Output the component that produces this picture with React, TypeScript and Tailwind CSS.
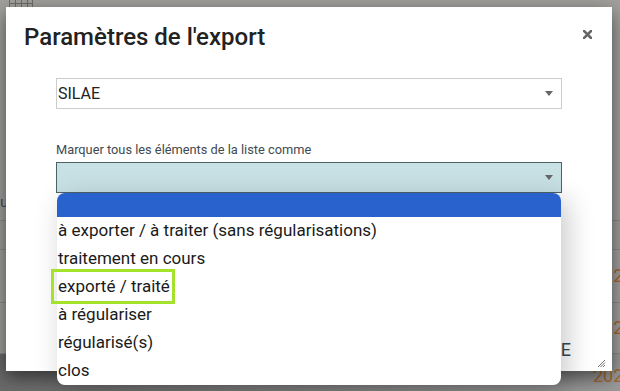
import React from 'react';

const options = [
  'à exporter / à traiter (sans régularisations)',
  'traitement en cours',
  'exporté / traité',
  'à régulariser',
  'régularisé(s)',
  'clos',
];

function Caret() {
  return (
    <svg width="8" height="5" viewBox="0 0 8 5" className="shrink-0">
      <path d="M0 0 L8 0 L4 5 Z" fill="#666" />
    </svg>
  );
}

export default function App() {
  return (
    <div className="relative w-[620px] h-[391px] overflow-hidden bg-[#a3a19e] font-['Roboto',sans-serif]">
      {/* Page behind the overlay */}
      <div className="flex flex-col">
        <div className="h-[8px] flex pl-[9px]">
          <svg width="24" height="8" viewBox="0 0 24 8">
            <path d="M0.5 0 V8 M6.5 0 V8 M12.5 0 V8 M18.5 0 V8 M23.5 0 V8 M0 3.5 H24" stroke="#6e6d6b" strokeWidth="1" fill="none" />
          </svg>
        </div>
        <div className="h-[177px]" />
        <div className="h-[35px] flex items-center text-[15px] text-[#3d4f5a]">ur</div>
        <div className="h-[29px] border-t border-[#8e8c89] bg-[#a09e9b]" />
        <div className="h-[53px] border-t border-[#8e8c89] flex items-center pl-[593px]">
          <span className="text-[18px] leading-[24px] text-[#a8672c] whitespace-nowrap">2023</span>
        </div>
        <div className="h-[51px] border-t border-[#8e8c89] flex items-center pl-[593px]">
          <span className="text-[18px] leading-[24px] text-[#a8672c] whitespace-nowrap">2023</span>
        </div>
        <div className="h-[40px] border-t border-[#8e8c89] bg-gradient-to-r from-[#6a6a6a] to-[#9a9a9a] flex items-start pt-[10px] pl-[593px]">
          <span className="text-[18px] leading-[24px] text-[#a8672c] whitespace-nowrap">2023</span>
        </div>
      </div>

      {/* Modal */}
      <div className="absolute left-[6px] top-[7px] w-[606px] h-[364px] bg-white shadow-[0_6px_18px_rgba(0,0,0,0.55)]">
        <div className="flex items-start justify-between pl-[18px] pr-[20px] pt-[16px]">
          <h2 className="text-[24px] leading-[28px] font-medium text-[#222]">Paramètres de l'export</h2>
          <svg width="9" height="9" viewBox="0 0 9 9" className="mt-[7px]">
            <path d="M1 1 L8 8 M8 1 L1 8" stroke="#666" strokeWidth="2.6" strokeLinecap="square" />
          </svg>
        </div>

        <div className="pl-[50px] pt-[27px] w-[556px]">
          <div className="h-[31px] border border-[#cccccc] flex items-center justify-between pl-[1px] pr-[8px] text-[16px] text-[#222]">
            <span>SILAE</span>
            <Caret />
          </div>

          <div className="mt-[33px] text-[12.8px] leading-[16px] text-[#3f4a50]">
            Marquer tous les éléments de la liste comme
          </div>

          <div className="relative mt-[4px]">
            <div className="h-[31px] border border-[#4d6367] bg-[#c8e1e5] flex items-center justify-end pr-[8px]">
              <Caret />
            </div>

            {/* Open list */}
            <div className="absolute left-[1px] top-[31px] w-[504px] z-10 bg-white rounded-[8px] shadow-[6px_6px_28px_rgba(0,0,0,0.22)] flex flex-col text-[17px] text-[#1a1a1a]">
              <div className="h-[24px] bg-[#2962cc] rounded-t-[8px]" />
              {options.map((o) => (
                <div key={o} className="h-[28px] flex items-center pl-[1px]">
                  {o}
                </div>
              ))}
              <div className="absolute left-[-6px] top-[76px] w-[124px] h-[35px] border-[3px] border-[#a5e22c]" />
            </div>
          </div>
        </div>

        <div className="absolute right-[41px] bottom-[8px] text-[18px] text-[#2e4b55]">EXPORTE</div>
        <svg width="9" height="9" viewBox="0 0 9 9" className="absolute right-[6px] bottom-[3px]">
          <path d="M8 1 L1 8 M8 3.5 L3.5 8 M8 6 L6 8" stroke="#777" strokeWidth="1" />
        </svg>
      </div>
    </div>
  );
}
